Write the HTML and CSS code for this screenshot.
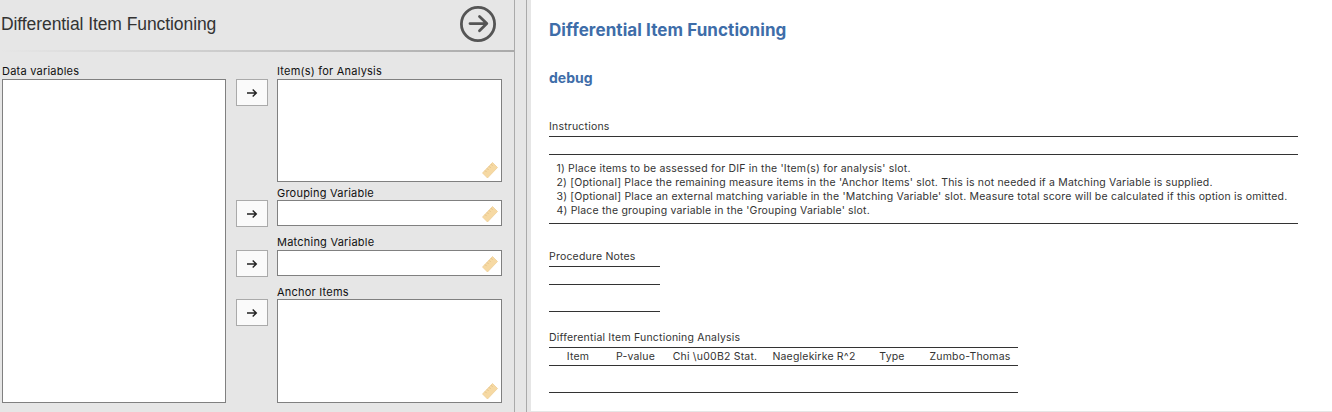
FILE: index.html
```html
<!DOCTYPE html>
<html lang="en">
<head>
<meta charset="utf-8">
<title>Differential Item Functioning</title>
<link rel="stylesheet" href="styles.css">
</head>
<body>
<svg class="defs" aria-hidden="true">
  <symbol id="arrow" viewBox="0 0 12 10"><path d="M1 5H10.3M6.7 1.5L10.3 5L6.7 8.5" fill="none" stroke="#222" stroke-width="1.4"/></symbol>
  <symbol id="ruler" viewBox="0 0 16 16"><path d="M0.5 11L10.5 0.5L15.5 5.5L5.5 16Z" fill="#f6d9a3" stroke="#eccb90" stroke-width=".7"/><path d="M3 8.5l1.6 1.6M5 6.4l1.6 1.6M7 4.3l1.6 1.6M9 2.2l1.6 1.6" stroke="#dfbd82" stroke-width=".8"/></symbol>
</svg>
<div class="app">
  <section class="options">
    <header class="head">
      <h1 class="title">Differential Item Functioning</h1>
      <svg class="go" viewBox="0 0 36 36"><circle cx="18" cy="18" r="16.6" fill="none" stroke="#555" stroke-width="2.8"/><path d="M10 17.6H26.5M19.5 10.5L26.8 17.6L19.5 24.8" fill="none" stroke="#555" stroke-width="2.8" stroke-linecap="round" stroke-linejoin="round"/></svg>
    </header>
    <div class="rule"></div>
    <div class="vars">
      <div class="source">
        <div class="label">Data variables</div>
        <div class="box fill"></div>
      </div>
      <div class="targets">
        <div class="row large">
          <button class="move"><svg><use href="#arrow"/></svg></button>
          <div class="slot"><div class="label">Item(s) for Analysis</div><div class="box"><svg><use href="#ruler"/></svg></div></div>
        </div>
        <div class="row group">
          <button class="move"><svg><use href="#arrow"/></svg></button>
          <div class="slot"><div class="label">Grouping Variable</div><div class="box"><svg><use href="#ruler"/></svg></div></div>
        </div>
        <div class="row match">
          <button class="move"><svg><use href="#arrow"/></svg></button>
          <div class="slot"><div class="label">Matching Variable</div><div class="box"><svg><use href="#ruler"/></svg></div></div>
        </div>
        <div class="row anchor">
          <button class="move"><svg><use href="#arrow"/></svg></button>
          <div class="slot"><div class="label">Anchor Items</div><div class="box"><svg><use href="#ruler"/></svg></div></div>
        </div>
      </div>
    </div>
  </section>
  <div class="splitter"></div>
  <main class="results">
    <h2 class="heading">Differential Item Functioning</h2>
    <h3 class="subheading">debug</h3>
    <section class="table instructions">
      <div class="caption">Instructions</div>
      <div class="thead"></div>
      <div class="tbody">
        <div>1) Place items to be assessed for DIF in the 'Item(s) for analysis' slot.</div>
        <div>2) [Optional] Place the remaining measure items in the 'Anchor Items' slot. This is not needed if a Matching Variable is supplied.</div>
        <div>3) [Optional] Place an external matching variable in the 'Matching Variable' slot. Measure total score will be calculated if this option is omitted.</div>
        <div>4) Place the grouping variable in the 'Grouping Variable' slot.</div>
      </div>
    </section>
    <section class="table notes">
      <div class="caption">Procedure Notes</div>
      <div class="thead"></div>
      <div class="tbody"></div>
    </section>
    <section class="table analysis">
      <div class="caption">Differential Item Functioning Analysis</div>
      <div class="thead"><span>Item</span><span>P-value</span><span>Chi \u00B2 Stat.</span><span>Naeglekirke R^2</span><span>Type</span><span>Zumbo-Thomas</span></div>
      <div class="tbody"></div>
    </section>
  </main>
</div>
</body>
</html>
```
FILE: styles.css
```css
* { box-sizing: border-box; }
body { margin: 0; background: #e6e6e6; font-family: Inter, "Liberation Sans", sans-serif; overflow: hidden; }
.defs { display: none; }
.app { display: flex; height: 412px; }
.options { width: 515px; border-right: 1px solid #aaa; }
.head { display: flex; justify-content: space-between; height: 50px; padding: 6px 18px 0 1px; }
.title { margin: 0; font: 400 17.5px/36px "Liberation Sans", Arial, sans-serif; letter-spacing: -.08px; color: #333; white-space: nowrap; }
.go { width: 36px; height: 36px; }
.rule { height: 2px; background: linear-gradient(to right, #e6e6e6, #aaa); }
.vars { display: flex; padding: 12px 0 0 2px; }
.label { height: 15px; font-size: 11px; line-height: 14px; letter-spacing: .22px; color: #111; white-space: nowrap; }
.source { width: 224px; }
.box { background: #fff; border: 1px solid #808080; display: flex; justify-content: flex-end; align-items: flex-end; padding: 0 3px 3px 0; }
.box svg { width: 16px; height: 16px; }
.fill { height: 324px; }
.targets { margin-left: 10px; }
.row { display: flex; gap: 9px; }
.move { width: 32px; height: 27px; margin: 15px 0 0; padding: 0; background: #fafafa; border: 1px solid #aaa; display: flex; align-items: center; justify-content: center; }
.move svg { width: 12px; height: 10px; }
.slot { width: 225px; }
.large { height: 121px; }
.large .box { height: 103px; }
.group { height: 50px; }
.match { height: 49px; }
.group .label, .anchor .label { line-height: 16px; }
.group .box, .match .box { height: 26px; }
.anchor .box { height: 104px; }
.splitter { width: 16px; border-right: 4px solid #e6e6e6; box-shadow: inset -1px 0 #aaa; }
.results { flex: 1; height: 411px; background: #fff; padding: 19px 0 0 18px; color: #333; }
.heading { margin: 0; font-size: 17px; line-height: 22px; font-weight: 700; letter-spacing: .08px; color: #3e6da9; }
.subheading { margin: 28px 0 0; font-size: 14px; line-height: 18px; font-weight: 700; color: #3e6da9; }
.table { font-size: 10.5px; line-height: 14px; letter-spacing: .2px; white-space: nowrap; }
.caption { height: 17px; line-height: 16px; }
.thead { height: 19px; border-top: 1px solid #333; border-bottom: 1px solid #333; }
.tbody { height: 27px; border-bottom: 1px solid #333; }
.instructions { width: 749px; margin-top: 32px; }
.instructions .tbody { height: 69px; padding: 7px 0 0 7.5px; letter-spacing: .19px; }
.notes { width: 111px; margin-top: 25px; }
.analysis { width: 469px; margin-top: 18px; }
.analysis .thead { display: grid; grid-template-columns: 58px 57px 102px 96px 60px 96px; line-height: 17px; text-align: center; }
```
